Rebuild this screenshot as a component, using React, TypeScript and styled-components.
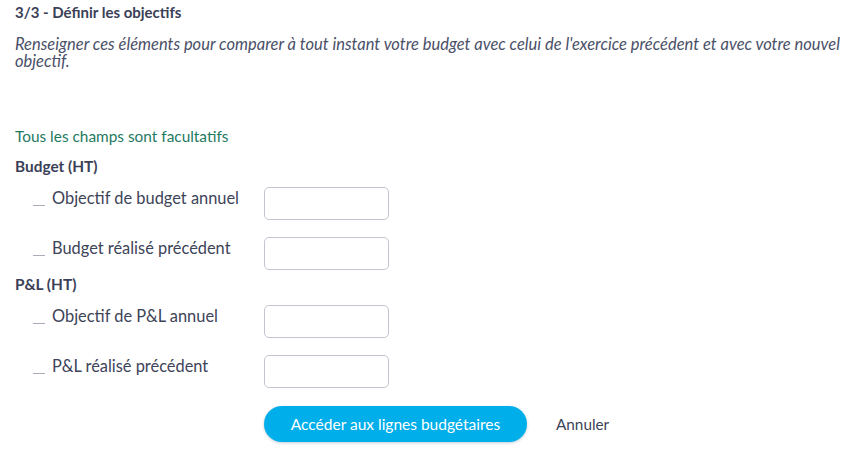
import React from 'react';
import styled, { createGlobalStyle } from 'styled-components';

const GlobalStyle = createGlobalStyle`
  html, body {
    margin: 0;
    padding: 0;
    background: #ffffff;
  }
  body {
    font-family: Lato, "Noto Sans", "Liberation Sans", sans-serif;
    color: #3d4358;
  }
`;

const Page = styled.div`
  width: 858px;
  height: 459px;
  box-sizing: border-box;
  padding: 4px 15px 0;
  overflow: hidden;
`;

const StepTitle = styled.h2`
  margin: 0;
  font-size: 15px;
  line-height: 17px;
  font-weight: 700;
  color: #3a4157;
`;

const Intro = styled.p`
  margin: 15px 0 0;
  font-size: 16.5px;
  line-height: 17px;
  font-style: italic;
  color: #4a5068;
`;

const OptionalNote = styled.div`
  margin-top: 57px;
  font-size: 15.4px;
  line-height: 18px;
  color: #1f7a5f;
`;

const SectionTitle = styled.div<{ $top: number }>`
  margin-top: ${({ $top }) => $top}px;
  font-size: 15.4px;
  line-height: 17px;
  font-weight: 700;
  color: #3a4157;
`;

const FieldList = styled.div`
  display: flex;
  flex-direction: column;
  gap: 17px;
  margin-top: 12px;
`;

const FieldRow = styled.label`
  display: grid;
  grid-template-columns: 249px 125px;
  align-items: start;
`;

const FieldLabel = styled.span`
  display: flex;
  align-items: center;
  gap: 7px;
  padding-left: 18px;
  padding-top: 1px;
  font-size: 16.4px;
  line-height: 20px;
  color: #3d4358;
`;

const Branch = styled.span`
  width: 12px;
  height: 1px;
  margin-top: 15px;
  background: #a9abb9;
`;

const AmountInput = styled.input`
  box-sizing: border-box;
  width: 125px;
  height: 33px;
  border: 1px solid #c3c4cf;
  border-radius: 5px;
  background: #fff;
  padding: 0 8px;
  font-family: inherit;
  font-size: 14px;
  outline: none;
`;

const Actions = styled.div`
  display: flex;
  align-items: center;
  gap: 29px;
  margin-top: 18px;
  padding-left: 249px;
`;

const PrimaryButton = styled.button`
  height: 36px;
  width: 263px;
  border: none;
  border-radius: 18px;
  background: #00aeea;
  color: #ffffff;
  font-family: inherit;
  font-size: 15.5px;
  box-shadow: 0 1px 3px rgba(0, 60, 90, 0.25);
  cursor: pointer;
`;

const CancelLink = styled.button`
  border: none;
  background: none;
  padding: 0;
  font-family: inherit;
  font-size: 15.3px;
  color: #3d4358;
  cursor: pointer;
`;

const budgetFields = ['Objectif de budget annuel', 'Budget réalisé précédent'];
const plFields = ['Objectif de P&L annuel', 'P&L réalisé précédent'];

const Field: React.FC<{ label: string }> = ({ label }) => (
  <FieldRow>
    <FieldLabel>
      <Branch />
      {label}
    </FieldLabel>
    <AmountInput type="text" />
  </FieldRow>
);

const App: React.FC = () => (
  <Page>
    <GlobalStyle />
    <StepTitle>3/3 - Définir les objectifs</StepTitle>
    <Intro>
      Renseigner ces éléments pour comparer à tout instant votre budget avec celui de l'exercice précédent et avec votre nouvel objectif.
    </Intro>
    <OptionalNote>Tous les champs sont facultatifs</OptionalNote>
    <SectionTitle $top={13}>Budget (HT)</SectionTitle>
    <FieldList>
      {budgetFields.map((f) => (
        <Field key={f} label={f} />
      ))}
    </FieldList>
    <SectionTitle $top={6}>P&amp;L (HT)</SectionTitle>
    <FieldList>
      {plFields.map((f) => (
        <Field key={f} label={f} />
      ))}
    </FieldList>
    <Actions>
      <PrimaryButton>Accéder aux lignes budgétaires</PrimaryButton>
      <CancelLink>Annuler</CancelLink>
    </Actions>
  </Page>
);

export default App;
